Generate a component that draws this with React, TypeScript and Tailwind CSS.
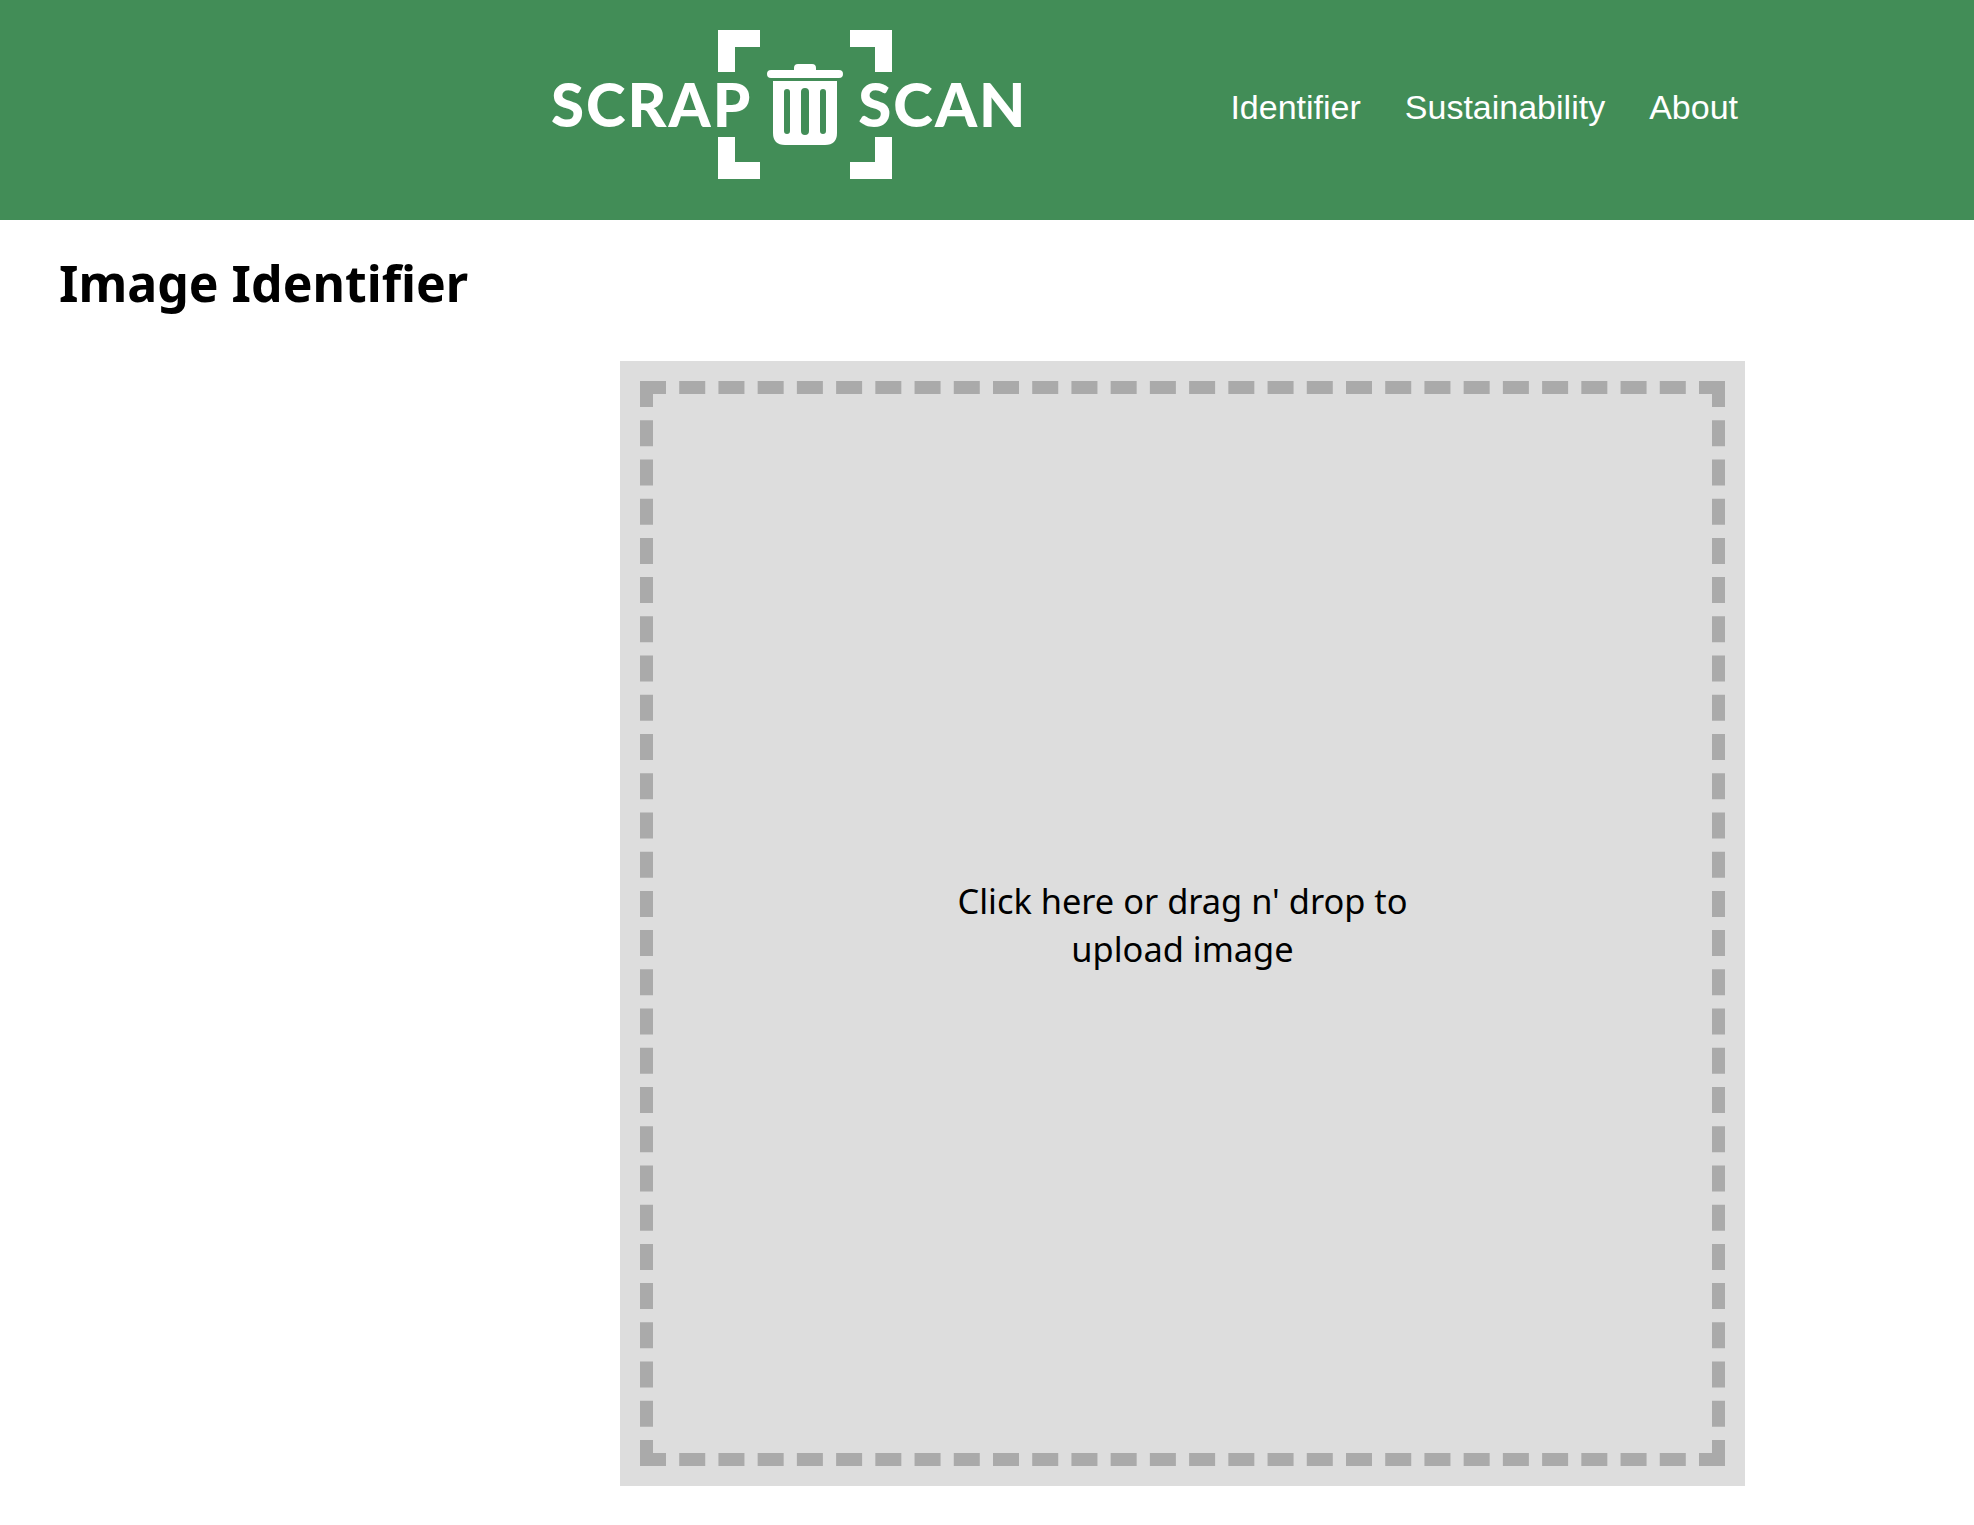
function LogoMark() {
  return (
    <svg width="174" height="149" viewBox="0 0 174 149" className="-mx-[34px] shrink-0" fill="#fff">
      {/* scan brackets */}
      <path d="M0 0h42v17H17v25H0zM174 0v42h-17V17h-25V0zM0 149v-42h17v25h25v17zM174 149h-42v-17h25v-25h17z" />
      {/* lid */}
      <path d="M76 40v-2q0-4 4-4h14q4 0 4 4v2h23q4 0 4 4t-4 4H53q-4 0-4-4t4-4z" />
      {/* bin */}
      <path
        fillRule="evenodd"
        d="M55 51h64v52q0 12-12 12H67q-12 0-12-12zM66 62v39a3 3 0 0 0 6 0V62a3 3 0 0 0-6 0zM83 62v39a4 4 0 0 0 8 0V62a4 4 0 0 0-8 0zM102 62v39a3 3 0 0 0 6 0V62a3 3 0 0 0-6 0z"
      />
    </svg>
  );
}

export default function App() {
  return (
    <div className="min-h-[1525px] bg-white text-black">
      <header className="flex h-[220px] bg-[#428d57] pl-[551px] pt-[30px]">
        <div className="flex h-[149px] items-center self-start font-['Lato',sans-serif] text-[60px] font-black leading-none tracking-[2px] text-white">
          <span className="pb-[2px]">SCRAP</span>
          <LogoMark />
          <span className="pb-[2px]">SCAN</span>
        </div>
        <nav className="ml-auto mr-[236px] flex gap-[44px] pt-[58px] font-['Liberation_Sans',sans-serif] text-[34px] leading-[39px] text-white">
          <a>Identifier</a>
          <a>Sustainability</a>
          <a>About</a>
        </nav>
      </header>

      <main>
        <h1 className="pl-[59px] pt-[28px] font-['Noto_Sans',sans-serif] text-[50px] font-bold leading-[70px]">
          Image Identifier
        </h1>
        <div className="ml-[620px] mt-[43px] size-[1125px] bg-[#ddd] p-[20px]">
          <div className="flex size-full items-center justify-center border-[13px] border-dashed border-[#aaa]">
            <p className="w-[500px] pt-[2px] text-center font-['Noto_Sans',sans-serif] text-[34.4px] leading-[48px]">
              Click here or drag n' drop to upload image
            </p>
          </div>
        </div>
      </main>
    </div>
  );
}
